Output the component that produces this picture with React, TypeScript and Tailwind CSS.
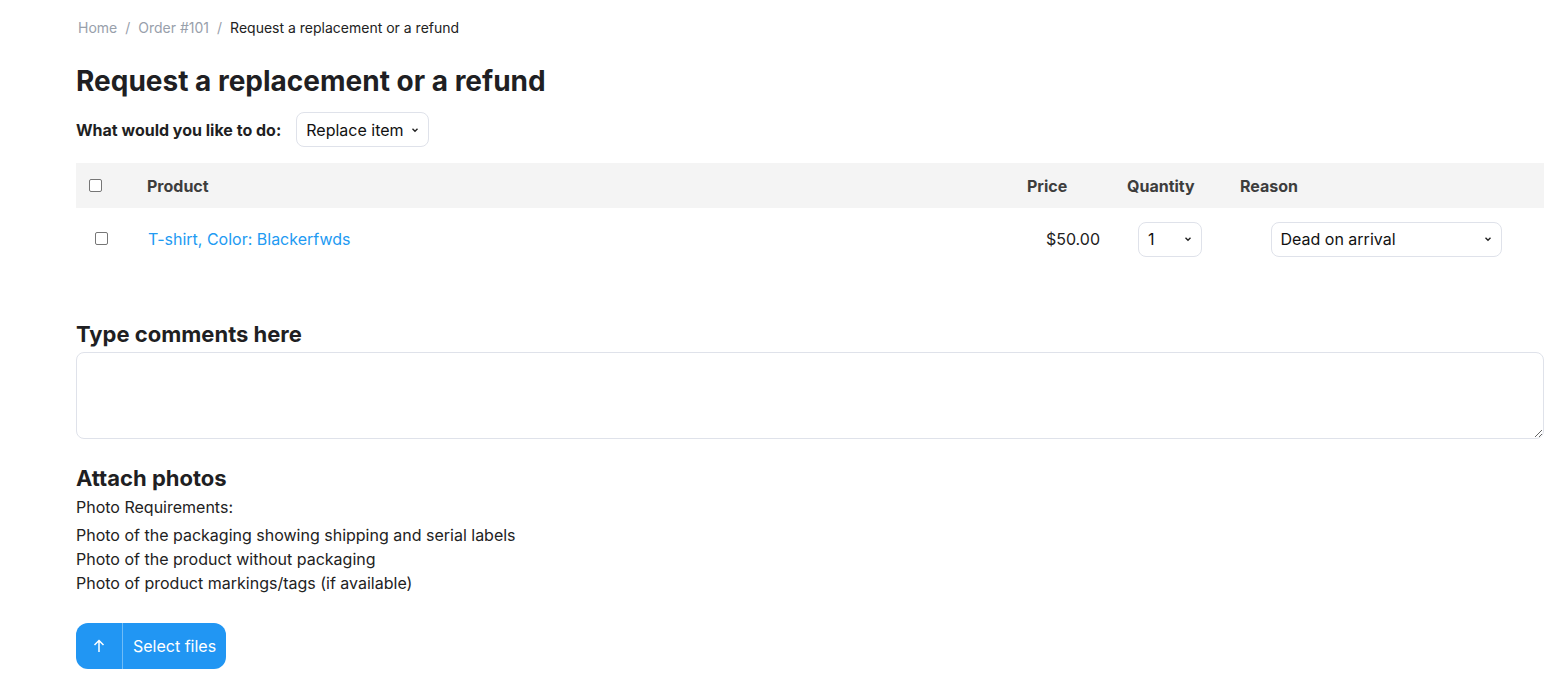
import React from "react";

const Chevron = () => (
  <svg width="10" height="10" viewBox="0 0 10 10" className="pointer-events-none absolute right-[8px] top-1/2 -translate-y-1/2">
    <path d="M2.5 3.8 L5 6.3 L7.5 3.8" fill="none" stroke="#222" strokeWidth="1.4" />
  </svg>
);

function FakeSelect({ label, className }: { label: string; className: string }) {
  return (
    <div className={`relative flex items-center rounded-lg border border-[#dfe2ea] bg-white pl-[9px] text-[16px] text-[#111] ${className}`}>
      {label}
      <Chevron />
    </div>
  );
}

function Box({ className = "" }: { className?: string }) {
  return <span className={`inline-block h-[13px] w-[13px] rounded-[2px] border border-[#767676] bg-white ${className}`} />;
}

export default function App() {
  return (
    <div className="min-h-[694px] bg-white pl-[76px] pr-[19px] text-[#212529]" style={{ fontFamily: "Inter, 'Noto Sans', sans-serif" }}>
      {/* Breadcrumb */}
      <nav className="flex h-[55px] items-center gap-[8px] pl-[2px] text-[14px]">
        <span className="text-[#98a0ab]">Home</span>
        <span className="text-[#98a0ab]">/</span>
        <span className="text-[#98a0ab]">Order #101</span>
        <span className="text-[#98a0ab]">/</span>
        <span className="text-[#222]">Request a replacement or a refund</span>
      </nav>

      <h1 className="mt-[8px] text-[28px] font-bold leading-[36px] text-[#1f1f23]">Request a replacement or a refund</h1>

      <div className="mt-[13px] flex items-center gap-[15px]">
        <span className="text-[16px] font-bold text-[#1f1f23]">What would you like to do:</span>
        <FakeSelect label="Replace item" className="h-[35px] w-[133px]" />
      </div>

      {/* Table */}
      <div className="mt-[16px]">
        <div className="flex h-[45px] items-center bg-[#f4f4f4] text-[16px] font-bold text-[#3d3d3d]">
          <div className="w-[71px] pl-[13px]"><Box /></div>
          <div className="flex-1">Product</div>
          <div className="w-[97px] pl-[12px]">Price</div>
          <div className="w-[116px] pl-[15px]">Quantity</div>
          <div className="w-[316px] pl-[12px]">Reason</div>
        </div>
        <div className="flex h-[62px] items-center text-[16px]">
          <div className="w-[72px] pl-[19px]"><Box /></div>
          <div className="flex-1 text-[#229af2]">T-shirt, Color: Blackerfwds</div>
          <div className="w-[97px] pr-[12px] text-right text-[#222]">$50.00</div>
          <div className="flex w-[116px] justify-center">
            <FakeSelect label="1" className="h-[35px] w-[64px]" />
          </div>
          <div className="flex w-[316px] justify-center">
            <FakeSelect label="Dead on arrival" className="h-[35px] w-[231px]" />
          </div>
        </div>
      </div>

      <h2 className="mt-[50px] text-[22px] font-bold leading-[28px] text-[#1f1f23]">Type comments here</h2>
      <textarea className="mt-[4px] block h-[87px] w-full rounded-lg border border-[#dfe2ea] bg-white" />

      <h2 className="mt-[25px] text-[22px] font-bold leading-[28px] text-[#1f1f23]">Attach photos</h2>
      <p className="mt-[3px] text-[16px] leading-[24px] text-[#222]">Photo Requirements:</p>
      <ul className="mt-[4px] text-[16px] leading-[24px] text-[#222]">
        <li>Photo of the packaging showing shipping and serial labels</li>
        <li>Photo of the product without packaging</li>
        <li>Photo of product markings/tags (if available)</li>
      </ul>

      <button className="mt-[28px] flex h-[46px] items-stretch overflow-hidden rounded-[12px] bg-[#2196f3] text-[16px] text-white">
        <span className="flex w-[47px] items-center justify-center border-r border-[#6fbcf7]">
          <svg width="14" height="14" viewBox="0 0 14 14" fill="none" stroke="white" strokeWidth="1.5">
            <path d="M7 13 V1.5 M2.5 6 L7 1.5 L11.5 6" />
          </svg>
        </span>
        <span className="flex items-center pl-[10px] pr-[10px]">Select files</span>
      </button>
    </div>
  );
}
